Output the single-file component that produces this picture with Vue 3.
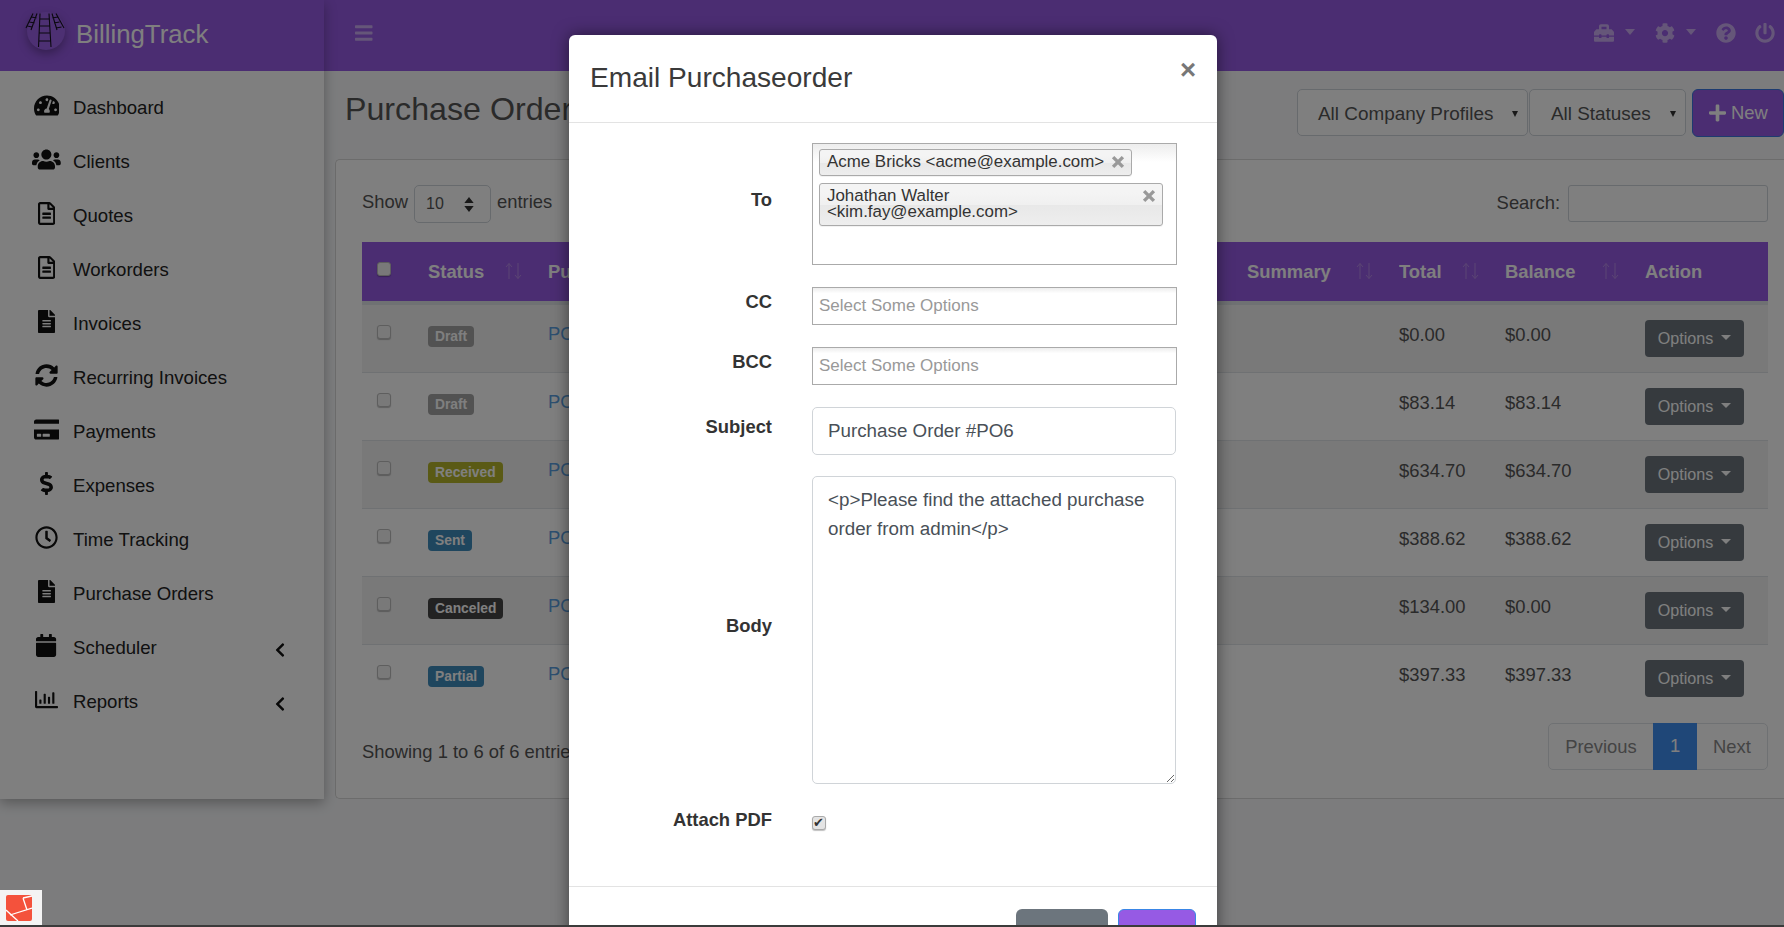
<script setup>
const P = {
  dash: ['0 0 576 512', 'M288 32C128.94 32 0 160.94 0 320c0 52.8 14.25 102.26 39.06 144.8 5.61 9.62 16.3 15.2 27.44 15.2h443c11.14 0 21.83-5.58 27.44-15.2C561.75 422.26 576 372.8 576 320c0-159.06-128.94-288-288-288zm0 64c14.71 0 26.58 10.13 30.32 23.65-1.11 2.26-2.64 4.23-3.45 6.67l-9.22 27.67c-5.13 3.49-10.97 6.01-17.64 6.01-17.67 0-32-14.33-32-32S270.33 96 288 96zM96 384c-17.67 0-32-14.33-32-32s14.33-32 32-32 32 14.33 32 32-14.33 32-32 32zm48-160c-17.67 0-32-14.33-32-32s14.33-32 32-32 32 14.33 32 32-14.33 32-32 32zm246.77-72.41l-61.33 184C343.13 347.33 352 364.54 352 384c0 11.72-3.38 22.55-8.88 32H232.88c-5.5-9.45-8.88-20.28-8.88-32 0-33.94 26.5-61.43 59.9-63.59l61.34-184.01c4.17-12.56 17.73-19.45 30.36-15.17 12.57 4.19 19.35 17.79 15.17 30.36zm14.66 57.2l15.52-46.55c3.47-1.29 7.13-2.23 11.05-2.23 17.67 0 32 14.33 32 32s-14.33 32-32 32c-11.38-.01-20.89-6.28-26.57-15.22zM480 384c-17.67 0-32-14.33-32-32s14.33-32 32-32 32 14.33 32 32-14.33 32-32 32z'],
  users: ['0 0 640 512', 'M96 224c35.3 0 64-28.7 64-64s-28.7-64-64-64-64 28.7-64 64 28.7 64 64 64zm448 0c35.3 0 64-28.7 64-64s-28.7-64-64-64-64 28.7-64 64 28.7 64 64 64zm32 32h-64c-17.6 0-33.5 7.1-45.1 18.6 40.3 22.1 68.9 62 75.1 109.4h66c17.7 0 32-14.3 32-32v-32c0-35.3-28.7-64-64-64zm-256 0c61.9 0 112-50.1 112-112S381.9 32 320 32 208 82.1 208 144s50.1 112 112 112zm76.8 32h-8.3c-20.8 10-43.9 16-68.5 16s-47.6-6-68.5-16h-8.3C179.6 288 128 339.6 128 403.2V432c0 26.5 21.5 48 48 48h288c26.5 0 48-21.5 48-48v-28.8c0-63.6-51.6-115.2-115.2-115.2zm-223.7-13.4C161.5 263.1 145.6 256 128 256H64c-35.3 0-64 28.7-64 64v32c0 17.7 14.3 32 32 32h65.9c6.3-47.4 34.9-87.3 75.2-109.4z'],
  fileO: ['0 0 384 512', 'M288 248v28c0 6.6-5.4 12-12 12H108c-6.6 0-12-5.4-12-12v-28c0-6.6 5.4-12 12-12h168c6.6 0 12 5.4 12 12zm-12 72H108c-6.6 0-12 5.4-12 12v28c0 6.6 5.4 12 12 12h168c6.6 0 12-5.4 12-12v-28c0-6.6-5.4-12-12-12zm108-188.1V464c0 26.5-21.5 48-48 48H48c-26.5 0-48-21.5-48-48V48C0 21.5 21.5 0 48 0h204.1C264.8 0 277 5.1 286 14.1L369.9 98c9 8.9 14.1 21.2 14.1 33.9zm-128-80V128h76.1L256 51.9zM336 464V176H232c-13.3 0-24-10.7-24-24V48H48v416h288z'],
  file: ['0 0 384 512', 'M224 136V0H24C10.7 0 0 10.7 0 24v464c0 13.3 10.7 24 24 24h336c13.3 0 24-10.7 24-24V160H248c-13.2 0-24-10.8-24-24zm64 236c0 6.6-5.4 12-12 12H108c-6.6 0-12-5.4-12-12v-8c0-6.6 5.4-12 12-12h168c6.6 0 12 5.4 12 12v8zm0-64c0 6.6-5.4 12-12 12H108c-6.6 0-12-5.4-12-12v-8c0-6.6 5.4-12 12-12h168c6.6 0 12 5.4 12 12v8zm0-72v8c0 6.6-5.4 12-12 12H108c-6.6 0-12-5.4-12-12v-8c0-6.6 5.4-12 12-12h168c6.6 0 12 5.4 12 12zm96-114.1v6.1H256V0h6.1c6.4 0 12.5 2.5 17 7l97.9 98c4.5 4.5 7 10.6 7 16.9z'],
  sync: ['0 0 512 512', 'M370.72 133.28C339.458 104.008 298.888 87.962 255.848 88c-77.458.068-144.328 53.178-162.791 126.85-1.344 5.363-6.122 9.15-11.651 9.15H24.103c-7.498 0-13.194-6.807-11.807-14.176C33.933 94.924 134.813 8 256 8c66.448 0 126.791 26.136 171.315 68.685L463.03 40.97C478.149 25.851 504 36.559 504 57.941V192c0 13.255-10.745 24-24 24H345.941c-21.382 0-32.09-25.851-16.971-40.971l41.75-41.749zM32 296h134.059c21.382 0 32.09 25.851 16.971 40.971l-41.75 41.75c31.262 29.273 71.835 45.319 114.876 45.28 77.418-.07 144.315-53.144 162.787-126.849 1.344-5.363 6.122-9.15 11.651-9.15h57.304c7.498 0 13.194 6.807 11.807 14.176C478.067 417.076 377.187 504 256 504c-66.448 0-126.791-26.136-171.315-68.685L48.97 471.03C33.851 486.149 8 475.441 8 454.059V320c0-13.255 10.745-24 24-24z'],
  card: ['0 0 576 512', 'M0 432c0 26.5 21.5 48 48 48h480c26.5 0 48-21.5 48-48V256H0v176zm192-68c0-6.6 5.4-12 12-12h136c6.6 0 12 5.4 12 12v40c0 6.6-5.4 12-12 12H204c-6.6 0-12-5.4-12-12v-40zm-128 0c0-6.6 5.4-12 12-12h72c6.6 0 12 5.4 12 12v40c0 6.6-5.4 12-12 12H76c-6.6 0-12-5.4-12-12v-40zM576 80v48H0V80c0-26.5 21.5-48 48-48h480c26.5 0 48 21.5 48 48z'],
  dollar: ['0 0 288 512', 'M209.2 233.4l-108-31.6C88.7 198.2 80 186.5 80 173.5c0-16.3 13.2-29.5 29.5-29.5h66.3c12.2 0 24.2 3.7 34.2 10.5 6.1 4.1 14.3 3.1 19.5-2l34.8-34c7.1-6.9 6.1-18.4-1.8-24.5C238 74.8 207.4 64.1 176 64V16c0-8.8-7.2-16-16-16h-32c-8.8 0-16 7.2-16 16v48h-2.5C45.8 64-5.4 118.7.5 183.6c4.2 46.1 39.4 83.6 83.8 96.6l102.5 30c12.5 3.7 21.2 15.3 21.2 28.3 0 16.3-13.2 29.5-29.5 29.5h-66.3C100 368 88 364.3 78 357.5c-6.1-4.1-14.3-3.1-19.5 2l-34.8 34c-7.1 6.9-6.1 18.4 1.8 24.5 24.5 19.2 55.1 29.9 86.5 30v48c0 8.8 7.2 16 16 16h32c8.8 0 16-7.2 16-16v-48.2c46.6-.9 90.3-28.6 105.7-72.7 21.5-61.6-14.6-124.8-72.5-141.7z'],
  clock: ['0 0 512 512', 'M256 8C119 8 8 119 8 256s111 248 248 248 248-111 248-248S393 8 256 8zm0 448c-110.5 0-200-89.5-200-200S145.5 56 256 56s200 89.5 200 200-89.5 200-200 200zm61.8-104.4l-84.9-61.7c-3.1-2.3-4.9-5.9-4.9-9.7V116c0-6.6 5.4-12 12-12h32c6.6 0 12 5.4 12 12v141.7l66.8 48.6c5.4 3.9 6.5 11.4 2.6 16.8L334.6 349c-3.9 5.3-11.4 6.5-16.8 2.6z'],
  calendar: ['0 0 448 512', 'M12 192h424c6.6 0 12 5.4 12 12v260c0 26.5-21.5 48-48 48H48c-26.5 0-48-21.5-48-48V204c0-6.6 5.4-12 12-12zm436-44v-36c0-26.5-21.5-48-48-48h-48V12c0-6.6-5.4-12-12-12h-40c-6.6 0-12 5.4-12 12v52H160V12c0-6.6-5.4-12-12-12h-40c-6.6 0-12 5.4-12 12v52H48C21.5 64 0 85.5 0 112v36c0 6.6 5.4 12 12 12h424c6.6 0 12-5.4 12-12z'],
  chart: ['0 0 512 512', 'M396.8 352h22.4c6.4 0 12.8-6.4 12.8-12.8V108.8c0-6.4-6.4-12.8-12.8-12.8h-22.4c-6.4 0-12.8 6.4-12.8 12.8v230.4c0 6.4 6.4 12.8 12.8 12.8zm-192 0h22.4c6.4 0 12.8-6.4 12.8-12.8V140.8c0-6.4-6.4-12.8-12.8-12.8h-22.4c-6.4 0-12.8 6.4-12.8 12.8v198.4c0 6.4 6.4 12.8 12.8 12.8zm96 0h22.4c6.4 0 12.8-6.4 12.8-12.8V204.8c0-6.4-6.4-12.8-12.8-12.8h-22.4c-6.4 0-12.8 6.4-12.8 12.8v134.4c0 6.4 6.4 12.8 12.8 12.8zM496 400H48V80c0-8.84-7.16-16-16-16H16C7.16 64 0 71.16 0 80v336c0 17.67 14.33 32 32 32h464c8.84 0 16-7.16 16-16v-16c0-8.84-7.16-16-16-16zm-387.2-48h22.4c6.4 0 12.8-6.4 12.8-12.8v-70.4c0-6.4-6.4-12.8-12.8-12.8h-22.4c-6.4 0-12.8 6.4-12.8 12.8v70.4c0 6.4 6.4 12.8 12.8 12.8z'],
  toolbox: ['0 0 512 512', 'M502.63 214.63l-45.25-45.25c-6-6-14.14-9.37-22.63-9.37H384V80c0-26.51-21.49-48-48-48H176c-26.51 0-48 21.49-48 48v80H77.25c-8.49 0-16.62 3.37-22.63 9.37L9.37 214.63c-6 6-9.37 14.14-9.37 22.63V320h128v-16c0-8.84 7.16-16 16-16h32c8.84 0 16 7.16 16 16v16h128v-16c0-8.84 7.16-16 16-16h32c8.84 0 16 7.16 16 16v16h128v-82.75c0-8.48-3.37-16.62-9.37-22.62zM320 160H192V96h128v64zm64 208c0 8.84-7.16 16-16 16h-32c-8.84 0-16-7.16-16-16v-16H192v16c0 8.84-7.16 16-16 16h-32c-8.84 0-16-7.16-16-16v-16H0v96c0 17.67 14.33 32 32 32h448c17.67 0 32-14.33 32-32v-96H384v16z'],
  cog: ['0 0 512 512', 'M487.4 315.7l-42.6-24.6c4.3-23.2 4.3-47 0-70.2l42.6-24.6c4.9-2.8 7.1-8.6 5.5-14-11.1-35.6-30-67.8-54.7-94.6-3.8-4.1-10-5.1-14.8-2.3L380.8 110c-17.9-15.4-38.5-27.3-60.8-35.1V25.8c0-5.6-3.9-10.5-9.4-11.7-36.7-8.2-74.3-7.8-109.2 0-5.5 1.2-9.4 6.1-9.4 11.7V75c-22.2 7.9-42.8 19.8-60.8 35.1L88.7 85.5c-4.9-2.8-11-1.9-14.8 2.3-24.7 26.7-43.6 58.9-54.7 94.6-1.7 5.4.6 11.2 5.5 14L67.3 221c-4.3 23.2-4.3 47 0 70.2l-42.6 24.6c-4.9 2.8-7.1 8.6-5.5 14 11.1 35.6 30 67.8 54.7 94.6 3.8 4.1 10 5.1 14.8 2.3l42.6-24.6c17.9 15.4 38.5 27.3 60.8 35.1v49.2c0 5.6 3.9 10.5 9.4 11.7 36.7 8.2 74.3 7.8 109.2 0 5.5-1.2 9.4-6.1 9.4-11.7v-49.2c22.2-7.9 42.8-19.8 60.8-35.1l42.6 24.6c4.9 2.8 11 1.9 14.8-2.3 24.7-26.7 43.6-58.9 54.7-94.6 1.5-5.5-.7-11.3-5.6-14.1zM256 336c-44.1 0-80-35.9-80-80s35.9-80 80-80 80 35.9 80 80-35.9 80-80 80z'],
  help: ['0 0 512 512', 'M504 256c0 136.997-111.043 248-248 248S8 392.997 8 256C8 119.083 119.043 8 256 8s248 111.083 248 248zM262.655 90c-54.497 0-89.255 22.957-116.549 63.758-3.536 5.286-2.353 12.415 2.715 16.258l34.699 26.31c5.205 3.947 12.621 3.008 16.665-2.122 17.864-22.658 30.113-35.797 57.303-35.797 20.429 0 45.698 13.148 45.698 32.958 0 14.976-12.363 22.667-32.534 33.976C247.128 238.528 216 254.941 216 296v4c0 6.627 5.373 12 12 12h56c6.627 0 12-5.373 12-12v-1.333c0-28.462 83.186-29.647 83.186-106.667 0-58.002-60.165-102-116.531-102zM256 338c-25.365 0-46 20.635-46 46 0 25.364 20.635 46 46 46s46-20.636 46-46c0-25.365-20.635-46-46-46z'],
  power: ['0 0 512 512', 'M400 54.1c63 45 104 118.6 104 201.9 0 136.8-110.8 247.7-247.5 248C120 504.3 8.2 393 8 256.4 7.9 173.1 48.9 99.3 111.8 54.2c11.7-8.3 28-4.8 35 7.7L162.6 90c5.9 10.5 3.1 23.8-6.6 31-41.5 30.8-68 79.6-68 134.9-.1 92.3 74.5 168.1 168 168.1 91.6 0 168.6-74.2 168-169.1-.3-51.8-24.7-101.8-68.1-134-9.7-7.2-12.4-20.5-6.5-30.9l15.8-28.1c7-12.4 23.2-16.1 34.8-7.8zM296 264V24c0-13.3-10.7-24-24-24h-32c-13.3 0-24 10.7-24 24v240c0 13.3 10.7 24 24 24h32c13.3 0 24-10.7 24-24z'],
  bars: ['0 0 448 512', 'M16 132h416c8.837 0 16-7.163 16-16V76c0-8.837-7.163-16-16-16H16C7.163 60 0 67.163 0 76v40c0 8.837 7.163 16 16 16zm0 160h416c8.837 0 16-7.163 16-16v-40c0-8.837-7.163-16-16-16H16c-8.837 0-16 7.163-16 16v40c0 8.837 7.163 16 16 16zm0 160h416c8.837 0 16-7.163 16-16v-40c0-8.837-7.163-16-16-16H16c-8.837 0-16 7.163-16 16v40c0 8.837 7.163 16 16 16z'],
  plus: ['0 0 448 512', 'M416 208H272V64c0-17.67-14.33-32-32-32h-32c-17.67 0-32 14.33-32 32v144H32c-17.67 0-32 14.33-32 32v32c0 17.67 14.33 32 32 32h144v144c0 17.67 14.33 32 32 32h32c17.67 0 32-14.33 32-32V304h144c17.67 0 32-14.33 32-32v-32c0-17.67-14.33-32-32-32z'],
  chevron: ['0 0 320 512', 'M34.52 239.03L228.87 44.69c9.37-9.37 24.57-9.37 33.94 0l22.67 22.67c9.36 9.36 9.37 24.52.04 33.9L131.49 256l154.02 154.75c9.34 9.38 9.32 24.54-.04 33.9l-22.67 22.67c-9.37 9.37-24.57 9.37-33.94 0L34.52 272.97c-9.37-9.37-9.37-24.57 0-33.94z'],
}

const nav = [
  { label: 'Dashboard', icon: P.dash },
  { label: 'Clients', icon: P.users },
  { label: 'Quotes', icon: P.fileO },
  { label: 'Workorders', icon: P.fileO },
  { label: 'Invoices', icon: P.file },
  { label: 'Recurring Invoices', icon: P.sync },
  { label: 'Payments', icon: P.card },
  { label: 'Expenses', icon: P.dollar },
  { label: 'Time Tracking', icon: P.clock },
  { label: 'Purchase Orders', icon: P.file },
  { label: 'Scheduler', icon: P.calendar, sub: true },
  { label: 'Reports', icon: P.chart, sub: true },
]

const columns = [
  { label: 'Status', sort: true },
  { label: 'Purchaseorder' },
  { label: 'Summary', sort: true },
  { label: 'Total', sort: true },
  { label: 'Balance', sort: true },
  { label: 'Action' },
]

const rows = [
  { status: 'Draft', cls: 'draft', no: 'PO6', total: '$0.00', balance: '$0.00' },
  { status: 'Draft', cls: 'draft', no: 'PO5', total: '$83.14', balance: '$83.14' },
  { status: 'Received', cls: 'received', no: 'PO4', total: '$634.70', balance: '$634.70' },
  { status: 'Sent', cls: 'sent', no: 'PO3', total: '$388.62', balance: '$388.62' },
  { status: 'Canceled', cls: 'canceled', no: 'PO2', total: '$134.00', balance: '$0.00' },
  { status: 'Partial', cls: 'sent', no: 'PO1', total: '$397.33', balance: '$397.33' },
]

const bodyText = '<p>Please find the attached purchase order from admin</p>'
</script>

<template>
  <div class="screen">
    <div class="page">
      <aside class="sidebar">
        <div class="brand">
          <svg class="logo" viewBox="0 0 44 44" fill="none" stroke="#14101c" stroke-width="1.1">
            <circle cx="22" cy="22" r="19" fill="#9a60e6" stroke="none" />
            <path d="M16 4.500 14.500 38M25 4.500 27 38M15.800 10h9.600M15.500 17h10M15.200 24h11M14.800 32h12M9 4.500 2 19M13 4.500 7 21M7.500 8l5 1M5.500 13l5 1M3.500 17l4.500 1M28 4.500l5 16.500M32 4.500l8 14.500M28.500 9l5-1M30 14l5.500-1M32 19l5.500-1" />
          </svg>
          <span class="brand-name">BillingTrack</span>
        </div>
        <nav class="nav">
          <a v-for="item in nav" :key="item.label" class="nav-item">
            <span class="nav-icon">
              <svg :viewBox="item.icon[0]" class="fa"><path :d="item.icon[1]" /></svg>
            </span>
            <span>{{ item.label }}</span>
            <svg v-if="item.sub" class="chevron" :viewBox="P.chevron[0]"><path :d="P.chevron[1]" /></svg>
          </a>
        </nav>
      </aside>

      <div class="main">
        <header class="topbar">
          <svg class="burger" :viewBox="P.bars[0]"><path :d="P.bars[1]" /></svg>
          <div class="top-tools">
            <svg class="tool" :viewBox="P.toolbox[0]"><path :d="P.toolbox[1]" /></svg>
            <i class="tool-caret"></i>
            <svg class="tool" :viewBox="P.cog[0]"><path :d="P.cog[1]" /></svg>
            <i class="tool-caret"></i>
            <svg class="tool help" :viewBox="P.help[0]"><path :d="P.help[1]" /></svg>
            <svg class="tool power" :viewBox="P.power[0]"><path :d="P.power[1]" /></svg>
          </div>
        </header>

        <div class="content-head">
          <h1>Purchase Orders</h1>
          <div class="filters">
            <div class="filter company">All Company Profiles<i></i></div>
            <div class="filter statuses">All Statuses<i></i></div>
            <button class="btn-new">
              <svg :viewBox="P.plus[0]"><path :d="P.plus[1]" /></svg>New
            </button>
          </div>
        </div>

        <section class="card">
          <div class="table-top">
            <div class="length">
              Show
              <div class="length-select">
                10
                <svg viewBox="0 0 10 16"><path d="M5 0 10 6.500H0zM5 16 0 9.500h10z" /></svg>
              </div>
              entries
            </div>
            <div class="search"><span>Search:</span> <input type="text" /></div>
          </div>

          <table class="grid">
            <colgroup>
              <col style="width: 54px" />
              <col style="width: 120px" />
              <col style="width: 699px" />
              <col style="width: 152px" />
              <col style="width: 106px" />
              <col style="width: 140px" />
              <col style="width: 135px" />
            </colgroup>
            <thead>
              <tr>
                <th class="check-col"><input type="checkbox" class="cb" /></th>
                <th v-for="col in columns" :key="col.label">
                  <div class="th-in">
                    {{ col.label }}
                    <svg v-if="col.sort" class="sort" viewBox="0 0 17 18" fill="none" stroke="currentColor">
                      <path d="M4 17V1.500M1 5l3-3.500L7 5M13 1v15.500M10 13l3 3.500 3-3.500" />
                    </svg>
                  </div>
                </th>
              </tr>
            </thead>
            <tbody>
              <tr v-for="row in rows" :key="row.no">
                <td class="check-col"><input type="checkbox" class="cb" /></td>
                <td><span class="badge" :class="row.cls">{{ row.status }}</span></td>
                <td><a class="po">{{ row.no }}</a></td>
                <td></td>
                <td class="money">{{ row.total }}</td>
                <td class="money">{{ row.balance }}</td>
                <td><button class="btn-options">Options<i></i></button></td>
              </tr>
            </tbody>
          </table>

          <div class="table-bottom">
            <div class="info">Showing 1 to 6 of 6 entries</div>
            <div class="pager">
              <a class="prev">Previous</a>
              <a class="current">1</a>
              <a class="next">Next</a>
            </div>
          </div>
        </section>
      </div>
    </div>

    <div class="backdrop"></div>

    <div class="modal">
      <div class="modal-head">
        <h2>Email Purchaseorder</h2>
        <span class="close">×</span>
      </div>
      <form class="modal-body" @submit.prevent>
        <div class="form-row">
          <label>To</label>
          <div class="chosen to">
            <span class="chip">Acme Bricks &lt;acme@example.com&gt;<svg viewBox="0 0 10 10"><path d="M1.500 1.500 8.500 8.500M8.500 1.500 1.500 8.500" /></svg></span>
            <span class="chip wide">Johathan Walter<br />&lt;kim.fay@example.com&gt;<svg viewBox="0 0 10 10"><path d="M1.500 1.500 8.500 8.500M8.500 1.500 1.500 8.500" /></svg></span>
          </div>
        </div>
        <div class="form-row">
          <label>CC</label>
          <div class="chosen"><input type="text" placeholder="Select Some Options" /></div>
        </div>
        <div class="form-row">
          <label>BCC</label>
          <div class="chosen"><input type="text" placeholder="Select Some Options" /></div>
        </div>
        <div class="form-row subject-row">
          <label>Subject</label>
          <input class="control subject" type="text" value="Purchase Order #PO6" />
        </div>
        <div class="form-row">
          <label>Body</label>
          <textarea class="control body" :value="bodyText"></textarea>
        </div>
        <div class="form-row attach">
          <label>Attach PDF</label>
          <input type="checkbox" class="cb modal-cb" checked />
        </div>
      </form>
      <div class="modal-foot">
        <button class="btn cancel">Cancel</button>
        <button class="btn send">Send</button>
      </div>
    </div>

    <div class="debugbar">
      <svg viewBox="0 0 26 26">
        <rect width="26" height="26" rx="2" fill="#f4523c" />
        <path d="M0 15 12 26M4 20 26 13M17 3l4 12M17 3l9-2" stroke="#fff" stroke-width="1.300" fill="none" />
      </svg>
    </div>
  </div>
  <div class="edge"></div>
</template>

<style>
html, body {
  margin: 0;
  overflow: hidden;
}
</style>

<style scoped>
.screen {
  position: relative;
  height: 925px;
  overflow: hidden;
  font-family: "Liberation Sans", Arial, sans-serif;
  font-size: 18.4px;
  line-height: 1.5;
  color: #555;
}
.edge {
  height: 2px;
  background: #3b3b3b;
}
.page {
  display: flex;
  height: 925px;
  background: #f8f9fb;
}

/* sidebar */
.sidebar {
  width: 324px;
  height: 799px;
  flex: none;
  background: #fff;
  box-shadow: 0 4px 12px rgba(0, 0, 0, 0.3);
  position: relative;
  z-index: 2;
}
.brand {
  height: 71px;
  display: flex;
  align-items: center;
  padding-left: 24px;
  background: #965ae4;
}
.logo {
  width: 44px;
  height: 44px;
  margin: -10px 8px 0 0;
  filter: drop-shadow(0 4px 5px rgba(0, 0, 0, 0.3));
}
.brand-name {
  font-size: 25.8px;
  color: #fff;
  margin-top: -2px;
}
.nav {
  padding-top: 10px;
  font-size: 18.6px;
}
.nav-item {
  height: 54px;
  display: flex;
  align-items: center;
  padding: 0 39px 0 32px;
  color: #222;
}
.nav-icon {
  width: 29px;
  height: 23px;
  margin: 0 12px 6px 0;
  display: flex;
  justify-content: center;
}
.fa {
  height: 23px;
  fill: #111;
}
.chevron {
  width: 10px;
  height: 16px;
  margin-left: auto;
  margin-top: 3px;
  fill: #111;
}

/* top bar */
.main {
  flex: 1;
  min-width: 0;
}
.topbar {
  height: 71px;
  background: #965ae4;
  display: flex;
  align-items: center;
  justify-content: space-between;
  box-sizing: border-box;
  padding: 0 9px 5px 31px;
}
.burger {
  height: 20px;
  fill: rgba(255, 255, 255, 0.5);
}
.top-tools {
  display: flex;
  align-items: center;
}
.tool {
  height: 20px;
  fill: rgba(255, 255, 255, 0.5);
}
.tool-caret {
  border-top: 6px solid rgba(255, 255, 255, 0.5);
  border-left: 5px solid transparent;
  border-right: 5px solid transparent;
  margin: -3px 20px 0 11px;
}
.help {
  margin-left: 0;
}
.power {
  margin-left: 19px;
}

/* content */
.content-head {
  height: 88px;
  box-sizing: border-box;
  padding: 18px 0 0 21px;
  display: flex;
  justify-content: space-between;
}
h1 {
  margin: 1px 0 0;
  font-size: 32.2px;
  font-weight: 400;
  line-height: 38px;
  color: #555;
}
.filters {
  display: flex;
  align-items: flex-start;
}
.filter {
  position: relative;
  height: 47px;
  line-height: 47px;
  box-sizing: border-box;
  border: 1px solid #ced4da;
  border-radius: 5px;
  background: #fff;
  color: #555;
  font-size: 18.9px;
}
.filter.company {
  width: 231px;
  padding-left: 20px;
}
.filter.statuses {
  width: 157px;
  padding-left: 21px;
  margin-left: 1px;
}
.filter i {
  position: absolute;
  right: 9px;
  top: 21px;
  border-top: 6px solid #333;
  border-left: 3.500px solid transparent;
  border-right: 3.500px solid transparent;
}
.btn-new {
  width: 92px;
  height: 48px;
  margin-left: 6px;
  border: 1px solid #3a76e0;
  border-radius: 6px;
  background: #965ae4;
  color: #fff;
  font: inherit;
  display: flex;
  align-items: center;
  padding: 0 0 0 16px;
}
.btn-new svg {
  height: 20px;
  width: 17px;
  fill: #fff;
  margin-right: 5px;
}
.card {
  margin-left: 11px;
  height: 640px;
  box-sizing: border-box;
  padding: 25px 16px 0 26px;
  background: #fff;
  border: 1px solid #d8d8d8;
  border-right: none;
  border-radius: 5px 0 0 5px;
}
.table-top {
  display: flex;
  justify-content: space-between;
  align-items: flex-start;
  height: 57px;
}
.length {
  display: flex;
  align-items: center;
  gap: 6px;
  height: 38px;
  margin-top: -2px;
}
.length-select {
  width: 77px;
  height: 38px;
  margin-top: 4px;
  box-sizing: border-box;
  border: 1px solid #ced4da;
  border-radius: 5px;
  padding-left: 11px;
  font-size: 16px;
  line-height: 38px;
  display: flex;
  justify-content: space-between;
  align-items: center;
}
.length-select svg {
  width: 12px;
  height: 15px;
  margin-right: 15px;
  fill: #333;
}
.search {
  display: flex;
  align-items: center;
  gap: 8px;
  height: 37px;
}
.search span {
  padding-bottom: 2px;
}
.search input {
  width: 200px;
  height: 37px;
  box-sizing: border-box;
  border: 1px solid #ced4da;
  border-radius: 3px;
  background: #fff;
}
.grid {
  width: 1406px;
  table-layout: fixed;
  border-collapse: separate;
  border-spacing: 0;
}
.grid th {
  height: 63px;
  box-sizing: border-box;
  background: #965ae4;
  border-bottom: 4px solid #dee2e6;
  color: #fff;
  font-weight: 700;
  text-align: left;
  padding: 0 0 0 12px;
}
.th-in {
  display: flex;
  align-items: center;
  justify-content: space-between;
  padding-right: 14px;
  white-space: nowrap;
  overflow: hidden;
}
.sort {
  width: 17px;
  height: 18px;
  color: #b68ae8;
  flex: none;
}
.grid td {
  height: 68px;
  box-sizing: border-box;
  border-bottom: 1px solid #dee2e6;
  padding: 15px 0 0 12px;
  vertical-align: top;
}
.grid tbody tr:last-child td {
  border-bottom: none;
}
.grid td.money {
  padding-top: 16px;
}
.grid tbody tr:nth-child(odd) td {
  background: #f2f2f2;
}
.grid .check-col {
  padding: 0 0 0 15px;
}
.grid td.check-col {
  padding-top: 20px;
}
.grid th.check-col .cb {
  margin-bottom: 6px;
}
.cb {
  appearance: none;
  display: block;
  width: 14px;
  height: 14px;
  margin: 0;
  box-sizing: border-box;
  background: #f2f2f2;
  border: 1px solid #bdbdbd;
  border-radius: 3px;
  box-shadow: 0 1px 1px rgba(0, 0, 0, 0.25);
}
.badge {
  display: inline-block;
  padding: 0 7px;
  height: 21px;
  margin-top: 6px;
  vertical-align: top;
  line-height: 21px;
  font-size: 13.800px;
  font-weight: 700;
  color: #fff;
  border-radius: 4px;
}
.badge.draft { background: #a4a4a4; }
.badge.received { background: #b4b42a; }
.badge.sent { background: #3f8cbc; }
.badge.canceled { background: #444; }
.po {
  color: #5a9fe0;
}
.btn-options {
  width: 99px;
  height: 37px;
  border: none;
  border-radius: 4px;
  background: #6c757d;
  color: #fff;
  font: 16.100px "Liberation Sans", Arial, sans-serif;
  padding: 0;
  display: flex;
  align-items: center;
  justify-content: center;
}
.btn-options i {
  margin: -3px 0 0 8px;
  border-top: 5.500px solid #fff;
  border-left: 5.500px solid transparent;
  border-right: 5.500px solid transparent;
}
.table-bottom {
  display: flex;
  justify-content: space-between;
  align-items: flex-start;
  margin-top: 10px;
}
.info {
  margin-top: 15px;
}
.pager {
  display: flex;
  height: 47px;
  line-height: 45px;
  box-sizing: border-box;
  border: 1px solid #dee2e6;
  border-radius: 5px;
  color: #888;
}
.pager a {
  text-align: center;
}
.pager .prev { width: 104px; }
.pager .next { width: 70px; }
.pager .current {
  width: 44px;
  height: 47px;
  margin-top: -1px;
  background: #3f8ef0;
  color: #fff;
}

/* modal */
.backdrop {
  position: absolute;
  inset: 0;
  z-index: 5;
  background: rgba(0, 0, 0, 0.5);
}
.modal {
  position: absolute;
  z-index: 6;
  top: 35px;
  left: 569px;
  width: 648px;
  background: #fff;
  border-radius: 6px;
  box-shadow: 0 0 16px rgba(0, 0, 0, 0.5);
  color: #333;
}
.modal-head {
  height: 87px;
  border-bottom: 1px solid #e3e3e3;
  padding-left: 21px;
  position: relative;
}
h2 {
  margin: 0;
  padding-top: 21px;
  font-size: 28.100px;
  font-weight: 400;
  line-height: 44px;
  color: #3a3a3a;
}
.close {
  position: absolute;
  top: 21px;
  right: 21px;
  font-size: 27.600px;
  font-weight: 700;
  line-height: 1;
  color: #777;
}
.modal-body {
  padding-top: 20px;
  height: 763px;
  box-sizing: border-box;
}
.form-row {
  display: grid;
  grid-template-columns: 203px 365px;
  column-gap: 40px;
  align-items: center;
  margin-bottom: 22px;
}
.subject-row {
  margin-bottom: 21px;
}
.form-row label {
  text-align: right;
  font-weight: 700;
  padding-bottom: 8px;
}
.form-row.attach label {
  padding-bottom: 10px;
}
.chosen {
  box-sizing: border-box;
  height: 38px;
  border: 1px solid #aaa;
  background: linear-gradient(#eee 1%, #fff 15%);
}
.chosen input {
  width: 100%;
  height: 36px;
  box-sizing: border-box;
  border: none;
  outline: none;
  background: none;
  padding: 0 6px;
  font: 17px "Liberation Sans", Arial, sans-serif;
}
.chosen input::placeholder {
  color: #999;
  opacity: 1;
}
.chosen.to {
  height: 122px;
  padding: 5px 6px;
  display: flex;
  flex-direction: column;
  align-items: flex-start;
  gap: 7px;
}
.chip {
  position: relative;
  box-sizing: border-box;
  padding: 4px 27px 4px 7px;
  border: 1px solid #aaa;
  border-radius: 3px;
  background: linear-gradient(#f4f4f4 20%, #f0f0f0 50%, #e8e8e8 52%, #eee 100%);
  box-shadow: 0 1px 0 rgba(0, 0, 0, 0.05);
  font-size: 16.900px;
  line-height: 16.600px;
  color: #333;
  white-space: nowrap;
}
.chip.wide {
  width: 344px;
}
.chip svg {
  position: absolute;
  top: 5px;
  right: 6px;
  width: 14px;
  height: 14px;
  fill: none;
  stroke: #999;
  stroke-width: 2.400;
}
.control {
  box-sizing: border-box;
  width: 364px;
  border: 1px solid #d0d4d8;
  border-radius: 5px;
  background: #fff;
  color: #495057;
  font: 18.800px "Liberation Sans", Arial, sans-serif;
  padding: 0 15px;
  outline: none;
  display: block;
}
.subject {
  height: 48px;
}
.body {
  height: 308px;
  line-height: 28.800px;
  padding-top: 9px;
  resize: vertical;
}
.form-row.attach {
  height: 38px;
  margin: 0;
}
.modal-cb {
  position: relative;
  top: -2px;
  background: #e4e4e4;
  border-color: #aaa;
}
.modal-cb:checked::after {
  content: "✔";
  position: absolute;
  top: -2px;
  left: 0;
  font: 13px/16px "DejaVu Sans", sans-serif;
  color: #333;
}
.modal-foot {
  border-top: 1px solid #e3e3e3;
  padding: 22px 21px 10px;
  display: flex;
  justify-content: flex-end;
  gap: 10px;
}
.btn {
  box-sizing: border-box;
  height: 46px;
  padding: 0 16.500px;
  border-radius: 6px;
  color: #fff;
  font: inherit;
  border: 1px solid transparent;
}
.cancel {
  background: #6c757d;
}
.send {
  background: #965ae4;
  border-color: #3a86e6;
}

.debugbar {
  position: absolute;
  z-index: 7;
  left: 0;
  bottom: 0;
  width: 42px;
  height: 35px;
  background: #f4f4f4;
  display: flex;
  align-items: center;
  padding-left: 6px;
  box-sizing: border-box;
}
.debugbar svg {
  width: 26px;
  height: 26px;
}
</style>
